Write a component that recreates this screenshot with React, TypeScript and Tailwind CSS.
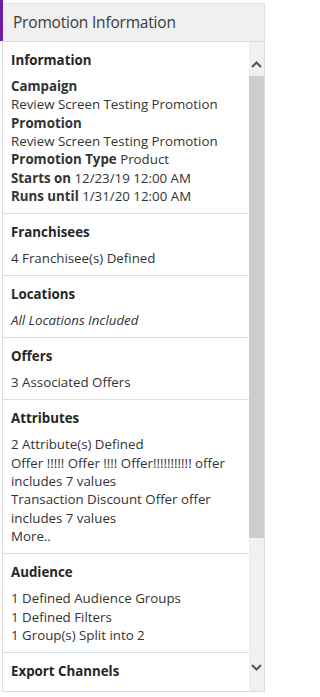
import React from 'react'

type Section = {
  title: string
  lines: React.ReactNode[]
}

const SECTIONS: Section[] = [
  {
    title: 'Information',
    lines: [
      <span className="font-bold">Campaign</span>,
      'Review Screen Testing Promotion',
      <span className="font-bold">Promotion</span>,
      'Review Screen Testing Promotion',
      <>
        <span className="font-bold">Promotion Type</span> Product
      </>,
      <>
        <span className="font-bold">Starts on</span> 12/23/19 12:00 AM
      </>,
      <>
        <span className="font-bold">Runs until</span> 1/31/20 12:00 AM
      </>,
    ],
  },
  { title: 'Franchisees', lines: ['4 Franchisee(s) Defined'] },
  { title: 'Locations', lines: [<span className="italic">All Locations Included</span>] },
  { title: 'Offers', lines: ['3 Associated Offers'] },
  {
    title: 'Attributes',
    lines: [
      '2 Attribute(s) Defined',
      'Offer !!!!! Offer !!!! Offer!!!!!!!!!!! offer includes 7 values',
      'Transaction Discount Offer offer includes 7 values',
      'More..',
    ],
  },
  {
    title: 'Audience',
    lines: ['1 Defined Audience Groups', '1 Defined Filters', '1 Group(s) Split into 2'],
  },
  { title: 'Export Channels', lines: [] },
]

function Chevron({ up }: { up?: boolean }) {
  return (
    <svg width="11" height="8" viewBox="0 0 11 8" className="block">
      <path
        d={up ? 'M1 7 L5.5 2.5 L10 7' : 'M1 1 L5.5 5.5 L10 1'}
        fill="none"
        stroke="#5a5a5a"
        strokeWidth="2.2"
      />
    </svg>
  )
}

export default function App() {
  return (
    <div className="w-[266px] h-[697px] bg-white text-[#333] font-['Open_Sans','Noto_Sans',sans-serif] overflow-hidden">
      {/* header */}
      <div className="flex h-[42px]">
        <div className="w-[3px] h-[41px] bg-[#6e1fa6]" />
        <div className="flex-1 mt-[3px] mr-[1px] bg-[#f0f0f0] border-t border-r border-t-[#e2e2e2] border-r-[#e2e2e2] border-b border-b-[#d3dbe3] flex items-center pl-[10px] text-[15.5px] text-[#3b3b3b] tracking-[-0.2px]">
          Promotion Information
        </div>
      </div>

      {/* body */}
      <div className="flex h-[650px] ml-[2px] mr-[1px] border-l border-b border-r border-[#dcdcdc]">
        <div className="flex-1 overflow-hidden">
          {SECTIONS.map((s) => (
            <div
              key={s.title}
              className="px-[8px] pt-[8.5px] pb-[7.8px] border-b border-[#d7dfe6] text-[13.3px]"
            >
              <div className="font-bold text-[#262626] leading-[19px] mb-[7.3px]">{s.title}</div>
              {s.lines.map((l, i) => (
                <div key={i} className="leading-[18.4px]">
                  {l}
                </div>
              ))}
            </div>
          ))}
        </div>

        {/* scrollbar */}
        <div className="w-[15px] bg-[#f0f0f0] flex flex-col">
          <div className="h-[34px] flex items-center justify-center pt-[10px]">
            <Chevron up />
          </div>
          <div className="h-[462px] bg-[#cdcdcd]" />
          <div className="flex-1 flex items-end justify-center pb-[19px]">
            <Chevron />
          </div>
        </div>
      </div>
    </div>
  )
}
